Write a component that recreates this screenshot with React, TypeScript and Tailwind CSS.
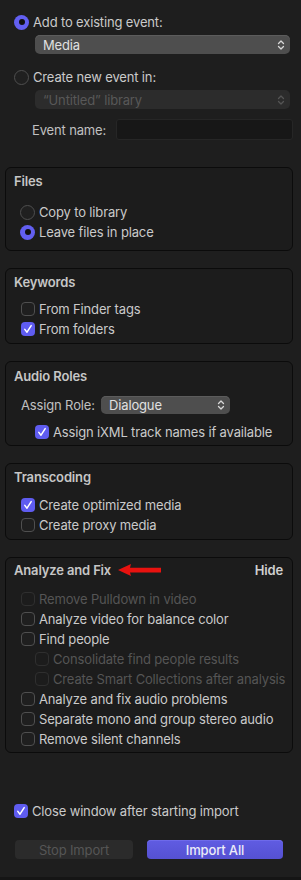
import React from 'react';

type CheckProps = {
  readonly label: string;
  readonly checked?: boolean;
  readonly disabled?: boolean;
  readonly indent?: boolean;
};

function Chevrons({ dim }: { readonly dim?: boolean }): React.ReactElement {
  return (
    <svg width="8" height="12" viewBox="0 0 8 12" className={dim ? 'text-[#555]' : 'text-[#d8d8d8]'}>
      <path d="M1.5 4.5 L4 2 L6.5 4.5" fill="none" stroke="currentColor" strokeWidth="1.3" strokeLinecap="round" strokeLinejoin="round" />
      <path d="M1.5 7.5 L4 10 L6.5 7.5" fill="none" stroke="currentColor" strokeWidth="1.3" strokeLinecap="round" strokeLinejoin="round" />
    </svg>
  );
}

function Radio({ label, checked }: { readonly label: string; readonly checked?: boolean }): React.ReactElement {
  return (
    <div className="flex h-5 items-center gap-[4px] whitespace-nowrap">
      {checked ? (
        <span className="flex h-[15px] w-[15px] shrink-0 items-center justify-center rounded-full bg-[#625ff1]">
          <span className="h-[6px] w-[6px] rounded-full bg-[#111]" />
        </span>
      ) : (
        <span className="h-[15px] w-[15px] shrink-0 rounded-full border border-[#4f4f4f] bg-[#202020]" />
      )}
      <span className="text-[#cacaca]">{label}</span>
    </div>
  );
}

function Check({ label, checked, disabled, indent }: CheckProps): React.ReactElement {
  return (
    <div className={`flex h-5 items-center gap-[4px] whitespace-nowrap ${indent ? 'pl-[14px]' : ''}`}>
      {checked ? (
        <span className="flex h-[14px] w-[14px] shrink-0 items-center justify-center rounded-[4px] bg-[#5f5cf0]">
          <svg width="14" height="14" viewBox="0 0 14 14">
            <path d="M3.8 7.4 L6 10.2 L10.2 3.6" fill="none" stroke="#fff" strokeWidth="1.5" strokeLinecap="round" strokeLinejoin="round" />
          </svg>
        </span>
      ) : (
        <span
          className={`h-[14px] w-[14px] shrink-0 rounded-[4px] border ${
            disabled ? 'border-[#2f2f2f]' : 'border-[#4f4f4f] bg-[#1f1f1f]'
          }`}
        />
      )}
      <span className={disabled ? 'text-[#555]' : 'text-[#cacaca]'}>{label}</span>
    </div>
  );
}

function Box({
  title,
  children,
  className,
  right,
}: {
  readonly title: React.ReactNode;
  readonly children: React.ReactNode;
  readonly className: string;
  readonly right?: string;
}): React.ReactElement {
  return (
    <div className={`rounded-[6px] border border-[#0b0b0b] bg-[#1c1c1c] pl-[8px] pr-[9px] ${className}`}>
      <div className="flex h-4 items-center justify-between">
        <div className="flex items-center font-semibold text-[#c6c6c6]">{title}</div>
        {right && <span className="font-semibold text-[#d0d0d0]">{right}</span>}
      </div>
      {children}
    </div>
  );
}

export default function App(): React.ReactElement {
  return (
    <div className="flex h-[880px] w-[301px] flex-col overflow-hidden bg-[#1e1e1e] text-[13px] leading-4 tracking-[-0.15px] [font-family:Inter,'Liberation_Sans',sans-serif]">
      <div className="flex flex-col pl-[14px] pr-[8px] pt-[12px]">
        <Radio label="Add to existing event:" checked />
        <div className="ml-[21px] mt-[3px] flex h-[19px] w-[255px] items-center justify-between rounded-[5px] bg-[#4e4e4e] pl-[8px] pr-[5px] shadow-[inset_0_1px_0_#5c5c5c]">
          <span className="text-[#e0e0e0]">Media</span>
          <Chevrons />
        </div>
        <div className="mt-[13px]">
          <Radio label="Create new event in:" />
        </div>
        <div className="ml-[21px] mt-[3px] flex h-[19px] w-[255px] items-center justify-between rounded-[5px] bg-[#2c2c2c] pl-[8px] pr-[5px]">
          <span className="text-[#585858]">“Untitled” library</span>
          <Chevrons dim />
        </div>
        <div className="mt-[10px] flex h-[21px] items-center">
          <span className="ml-[18px] w-[84px] text-[#c0c0c0]">Event name:</span>
          <span className="h-[21px] w-[177px] rounded-[3px] border border-[#262626] bg-[#171717]" />
        </div>
      </div>

      <div className="mt-[27px] flex flex-col gap-[17px] pl-[5px] pr-[8px]">
        <Box title="Files" className="h-[84px] pt-[5px]">
          <div className="mt-[13px] pl-[6px]">
            <Radio label="Copy to library" />
            <Radio label="Leave files in place" checked />
          </div>
        </Box>

        <Box title="Keywords" className="h-[76px] pt-[5px]">
          <div className="mt-[9px] pl-[7px]">
            <Check label="From Finder tags" />
            <Check label="From folders" checked />
          </div>
        </Box>

        <Box title="Audio Roles" className="h-[85px] pt-[6px]">
          <div className="mt-[12px] flex h-[18px] items-center pl-[7px]">
            <span className="w-[80px] text-[#c0c0c0]">Assign Role:</span>
            <div className="flex h-[18px] w-[129px] items-center justify-between rounded-[5px] bg-[#4e4e4e] pl-[8px] pr-[5px] shadow-[inset_0_1px_0_#5c5c5c]">
              <span className="text-[#e0e0e0]">Dialogue</span>
              <Chevrons />
            </div>
          </div>
          <div className="mt-[8px] pl-[7px]">
            <Check label="Assign iXML track names if available" checked indent />
          </div>
        </Box>

        <Box title="Transcoding" className="h-[77px] pt-[5px]">
          <div className="mt-[10px] pl-[7px]">
            <Check label="Create optimized media" checked />
            <Check label="Create proxy media" />
          </div>
        </Box>

        <Box
          title={
            <>
              <span>Analyze and Fix</span>
              <svg width="43" height="12" viewBox="0 0 43 12" className="ml-[7px]">
                <path d="M0 6 L13 0 L12 3.8 L43 3.8 L43 8.6 L12 8.6 L13 12 Z" fill="#e8120f" />
              </svg>
            </>
          }
          right="Hide"
          className="h-[196px] pt-[4px]"
        >
          <div className="mt-[11px] pl-[7px]">
            <Check label="Remove Pulldown in video" disabled />
            <Check label="Analyze video for balance color" />
            <Check label="Find people" />
            <Check label="Consolidate find people results" disabled indent />
            <Check label="Create Smart Collections after analysis" disabled indent />
            <Check label="Analyze and fix audio problems" />
            <Check label="Separate mono and group stereo audio" />
            <Check label="Remove silent channels" />
          </div>
        </Box>
      </div>

      <div className="mt-[48px] pl-[14px]">
        <Check label="Close window after starting import" checked />
      </div>

      <div className="mt-[19px] flex pl-[15px]">
        <button
          type="button"
          className="h-[19px] w-[118px] rounded-[4px] bg-[#2b2b2b] text-[#565656]"
        >
          Stop Import
        </button>
        <button
          type="button"
          className="ml-[14px] h-[19px] w-[136px] rounded-[4px] bg-gradient-to-b from-[#605ce2] to-[#5551d2] font-medium text-[#ececf8] shadow-[inset_0_1px_0_#6e6aea]"
        >
          Import All
        </button>
      </div>
      <div className="mt-auto h-[3px] bg-[#151515]" />
    </div>
  );
}
